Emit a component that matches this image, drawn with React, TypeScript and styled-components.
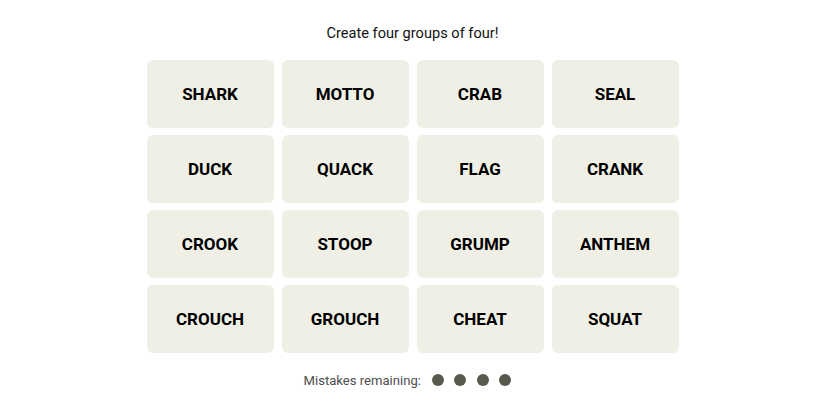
import React from "react";
import styled, { createGlobalStyle } from "styled-components";

const Global = createGlobalStyle`
  html, body { margin: 0; padding: 0; background: #ffffff; }
  body { font-family: Roboto, "Liberation Sans", sans-serif; color: #000; }
`;

const Page = styled.main`
  display: flex;
  flex-direction: column;
  align-items: center;
  padding-top: 23px;
  width: 825px;
`;

const Title = styled.p`
  margin: 0 0 17px;
  font-size: 14.6px;
  line-height: 20px;
  font-weight: 400;
  color: #121212;
`;

const Board = styled.div`
  display: grid;
  grid-template-columns: repeat(4, 127px);
  grid-auto-rows: 68px;
  column-gap: 8px;
  row-gap: 7px;
  width: 532px;
`;

const Tile = styled.button`
  display: flex;
  align-items: center;
  justify-content: center;
  border: none;
  border-radius: 6px;
  background: #efefe6;
  font-family: Roboto, "Liberation Sans", sans-serif;
  font-weight: 700;
  font-size: 17px;
  text-transform: uppercase;
  color: #000;
  padding: 0;
  cursor: pointer;
`;

const Mistakes = styled.div`
  display: flex;
  align-items: center;
  gap: 11px;
  margin-top: 17px;
  height: 20px;
  padding-right: 10px;
`;

const MistakesLabel = styled.span`
  font-size: 13.1px;
  color: #4d4d4d;
`;

const Dots = styled.div`
  display: flex;
  gap: 10.5px;
`;

const Dot = styled.span`
  width: 12px;
  height: 12px;
  border-radius: 50%;
  background: #5a594e;
`;

const words = [
  "SHARK", "MOTTO", "CRAB", "SEAL",
  "DUCK", "QUACK", "FLAG", "CRANK",
  "CROOK", "STOOP", "GRUMP", "ANTHEM",
  "CROUCH", "GROUCH", "CHEAT", "SQUAT",
];

export default function App() {
  return (
    <>
      <Global />
      <Page>
        <Title>Create four groups of four!</Title>
        <Board>
          {words.map((w) => (
            <Tile key={w}>{w}</Tile>
          ))}
        </Board>
        <Mistakes>
          <MistakesLabel>Mistakes remaining:</MistakesLabel>
          <Dots>
            {[0, 1, 2, 3].map((i) => (
              <Dot key={i} />
            ))}
          </Dots>
        </Mistakes>
      </Page>
    </>
  );
}
